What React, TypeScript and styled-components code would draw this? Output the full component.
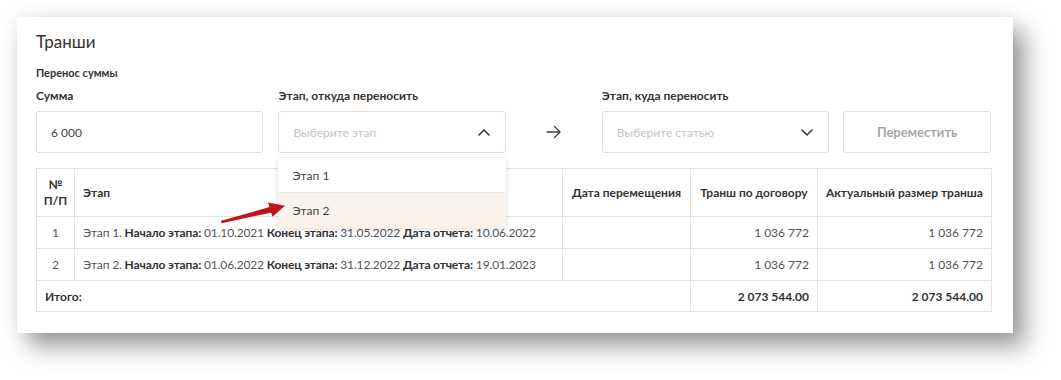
import React from "react";
import styled, { createGlobalStyle } from "styled-components";

const Global = createGlobalStyle`
  html, body { margin: 0; padding: 0; background: #fff; }
  body { font-family: "Lato", "Open Sans", sans-serif; color: #333; }
  * { box-sizing: border-box; }
`;

const Page = styled.div`
  padding: 17px 48px 48px 17px;
  width: 1061px;
  height: 380px;
`;

const Card = styled.div`
  position: relative;
  width: 996px;
  background: #fff;
  padding: 14px 22px 21px 19px;
  box-shadow: 0 0 18px rgba(0, 0, 0, 0.08), 12px 14px 22px rgba(0, 0, 0, 0.38);
`;

const Title = styled.h2`
  margin: 0;
  font-size: 17px;
  font-weight: 400;
  line-height: 22px;
  color: #333;
`;

const Subtitle = styled.div`
  margin-top: 13px;
  font-size: 11px;
  font-weight: 700;
  line-height: 14px;
`;

const FormRow = styled.div`
  display: flex;
  align-items: flex-end;
  margin-top: 8px;
`;

const Field = styled.div<{ $w: number; $ml?: number }>`
  display: flex;
  flex-direction: column;
  width: ${(p) => p.$w}px;
  margin-left: ${(p) => p.$ml ?? 0}px;
  position: relative;
`;

const Label = styled.div`
  font-size: 12px;
  font-weight: 700;
  line-height: 15px;
  height: 15px;
  margin-bottom: 8px;
`;

const Box = styled.div`
  height: 42px;
  border: 1px solid #e2ded8;
  border-radius: 3px;
  display: flex;
  align-items: center;
  padding: 0 14px;
  font-size: 12px;
  color: #444;
  background: #fff;
`;

const Placeholder = styled.span`
  flex: 1;
  color: #c9c5c0;
`;

const ArrowCell = styled.div`
  width: 96px;
  height: 42px;
  display: flex;
  align-items: center;
  padding-left: 40px;
  color: #444;
`;

const Button = styled.button`
  width: 148px;
  height: 42px;
  margin-left: 14px;
  border: 1px solid #e2ded8;
  border-radius: 3px;
  background: #fff;
  font-family: inherit;
  font-size: 13px;
  font-weight: 700;
  color: #a9a6a2;
`;

const Dropdown = styled.div`
  position: absolute;
  left: 0;
  top: 70px;
  width: 228px;
  background: #fff;
  border-radius: 3px;
  box-shadow: 0 1px 5px rgba(0, 0, 0, 0.15);
  z-index: 5;
  overflow: hidden;
`;

const Option = styled.div<{ $active?: boolean }>`
  height: ${(p) => (p.$active ? 36 : 34)}px;
  display: flex;
  align-items: center;
  padding-left: 14px;
  font-size: 12px;
  color: #444;
  background: ${(p) => (p.$active ? "#fbf2eb" : "#fff")};
  border-top: ${(p) => (p.$active ? "1px solid #ece7e1" : "none")};
`;

const Table = styled.table`
  margin-top: 15px;
  width: 955px;
  border-collapse: collapse;
  table-layout: fixed;
  font-size: 12px;
`;

const Th = styled.th<{ $align?: string }>`
  border: 1px solid #e6e2dc;
  height: 48px;
  padding: 0 ${(p) => (p.$align === "left" ? 8 : 2)}px;
  font-size: 12px;
  font-weight: 700;
  line-height: 16px;
  color: #333;
  white-space: nowrap;
  text-align: ${(p) => p.$align ?? "center"};
`;

const Td = styled.td<{ $align?: string; $h?: number; $bold?: boolean }>`
  border: 1px solid #e6e2dc;
  height: ${(p) => p.$h ?? 31}px;
  padding: 0 8px;
  color: ${(p) => (p.$bold ? "#333" : "#555")};
  font-weight: ${(p) => (p.$bold ? 700 : 400)};
  text-align: ${(p) => p.$align ?? "left"};
  white-space: nowrap;
`;

const StageText = styled.span`
  letter-spacing: -0.15px;
`;

const B = styled.b`
  color: #333;
  font-weight: 700;
`;

const Annotation = styled.svg`
  position: absolute;
  left: 200px;
  top: 180px;
  z-index: 6;
  overflow: visible;
`;

const Chevron = ({ up }: { up?: boolean }) => (
  <svg width="14" height="14" viewBox="0 0 14 14" fill="none">
    <path
      d={up ? "M2 10 L7 5 L12 10" : "M2 5 L7 10 L12 5"}
      stroke="#333"
      strokeWidth="1.5"
      strokeLinecap="round"
      strokeLinejoin="round"
    />
  </svg>
);

const rows = [
  { n: 1, stage: "Этап 1.", start: "01.10.2021", end: "31.05.2022", rep: "10.06.2022" },
  { n: 2, stage: "Этап 2.", start: "01.06.2022", end: "31.12.2022", rep: "19.01.2023" },
];

export default function App() {
  return (
    <Page>
      <Global />
      <Card>
        <Title>Транши</Title>
        <Subtitle>Перенос суммы</Subtitle>
        <FormRow>
          <Field $w={228}>
            <Label>Сумма</Label>
            <Box>6 000</Box>
          </Field>
          <Field $w={228} $ml={15}>
            <Label>Этап, откуда переносить</Label>
            <Box>
              <Placeholder>Выберите этап</Placeholder>
              <Chevron up />
            </Box>
            <Dropdown>
              <Option>Этап 1</Option>
              <Option $active>Этап 2</Option>
            </Dropdown>
          </Field>
          <ArrowCell>
            <svg width="16" height="14" viewBox="0 0 16 14" fill="none">
              <path d="M1 7 H14 M8.5 1.5 L14 7 L8.5 12.5" stroke="#444" strokeWidth="1.3" strokeLinecap="round" strokeLinejoin="round" />
            </svg>
          </ArrowCell>
          <Field $w={228}>
            <Label>Этап, куда переносить</Label>
            <Box>
              <Placeholder>Выберите статью</Placeholder>
              <Chevron />
            </Box>
          </Field>
          <Button>Переместить</Button>
        </FormRow>
        <Table>
          <colgroup>
            <col style={{ width: 38 }} />
            <col style={{ width: 488 }} />
            <col style={{ width: 128 }} />
            <col style={{ width: 127 }} />
            <col style={{ width: 174 }} />
          </colgroup>
          <thead>
            <tr>
              <Th>
                №
                <br />
                П/П
              </Th>
              <Th $align="left">Этап</Th>
              <Th>Дата перемещения</Th>
              <Th>Транш по договору</Th>
              <Th>Актуальный размер транша</Th>
            </tr>
          </thead>
          <tbody>
            {rows.map((r) => (
              <tr key={r.n}>
                <Td $align="center" $h={32}>{r.n}</Td>
                <Td $h={32}>
                  <StageText>
                    {r.stage} <B>Начало этапа:</B> {r.start} <B>Конец этапа:</B> {r.end}{" "}
                    <B>Дата отчета:</B> {r.rep}
                  </StageText>
                </Td>
                <Td />
                <Td $align="right">1 036 772</Td>
                <Td $align="right">1 036 772</Td>
              </tr>
            ))}
            <tr>
              <Td colSpan={3} $bold>
                Итого:
              </Td>
              <Td $align="right" $bold>
                2 073 544.00
              </Td>
              <Td $align="right" $bold>
                2 073 544.00
              </Td>
            </tr>
          </tbody>
        </Table>
        <Annotation width="90" height="40" viewBox="0 0 90 40">
          <polygon points="4,23.8 4.6,26.2 56,15.2 54.4,9.6" fill="#c0161b" />
          <polygon points="68,8.8 51,5.6 55.4,19.8" fill="#c0161b" />
        </Annotation>
      </Card>
    </Page>
  );
}
